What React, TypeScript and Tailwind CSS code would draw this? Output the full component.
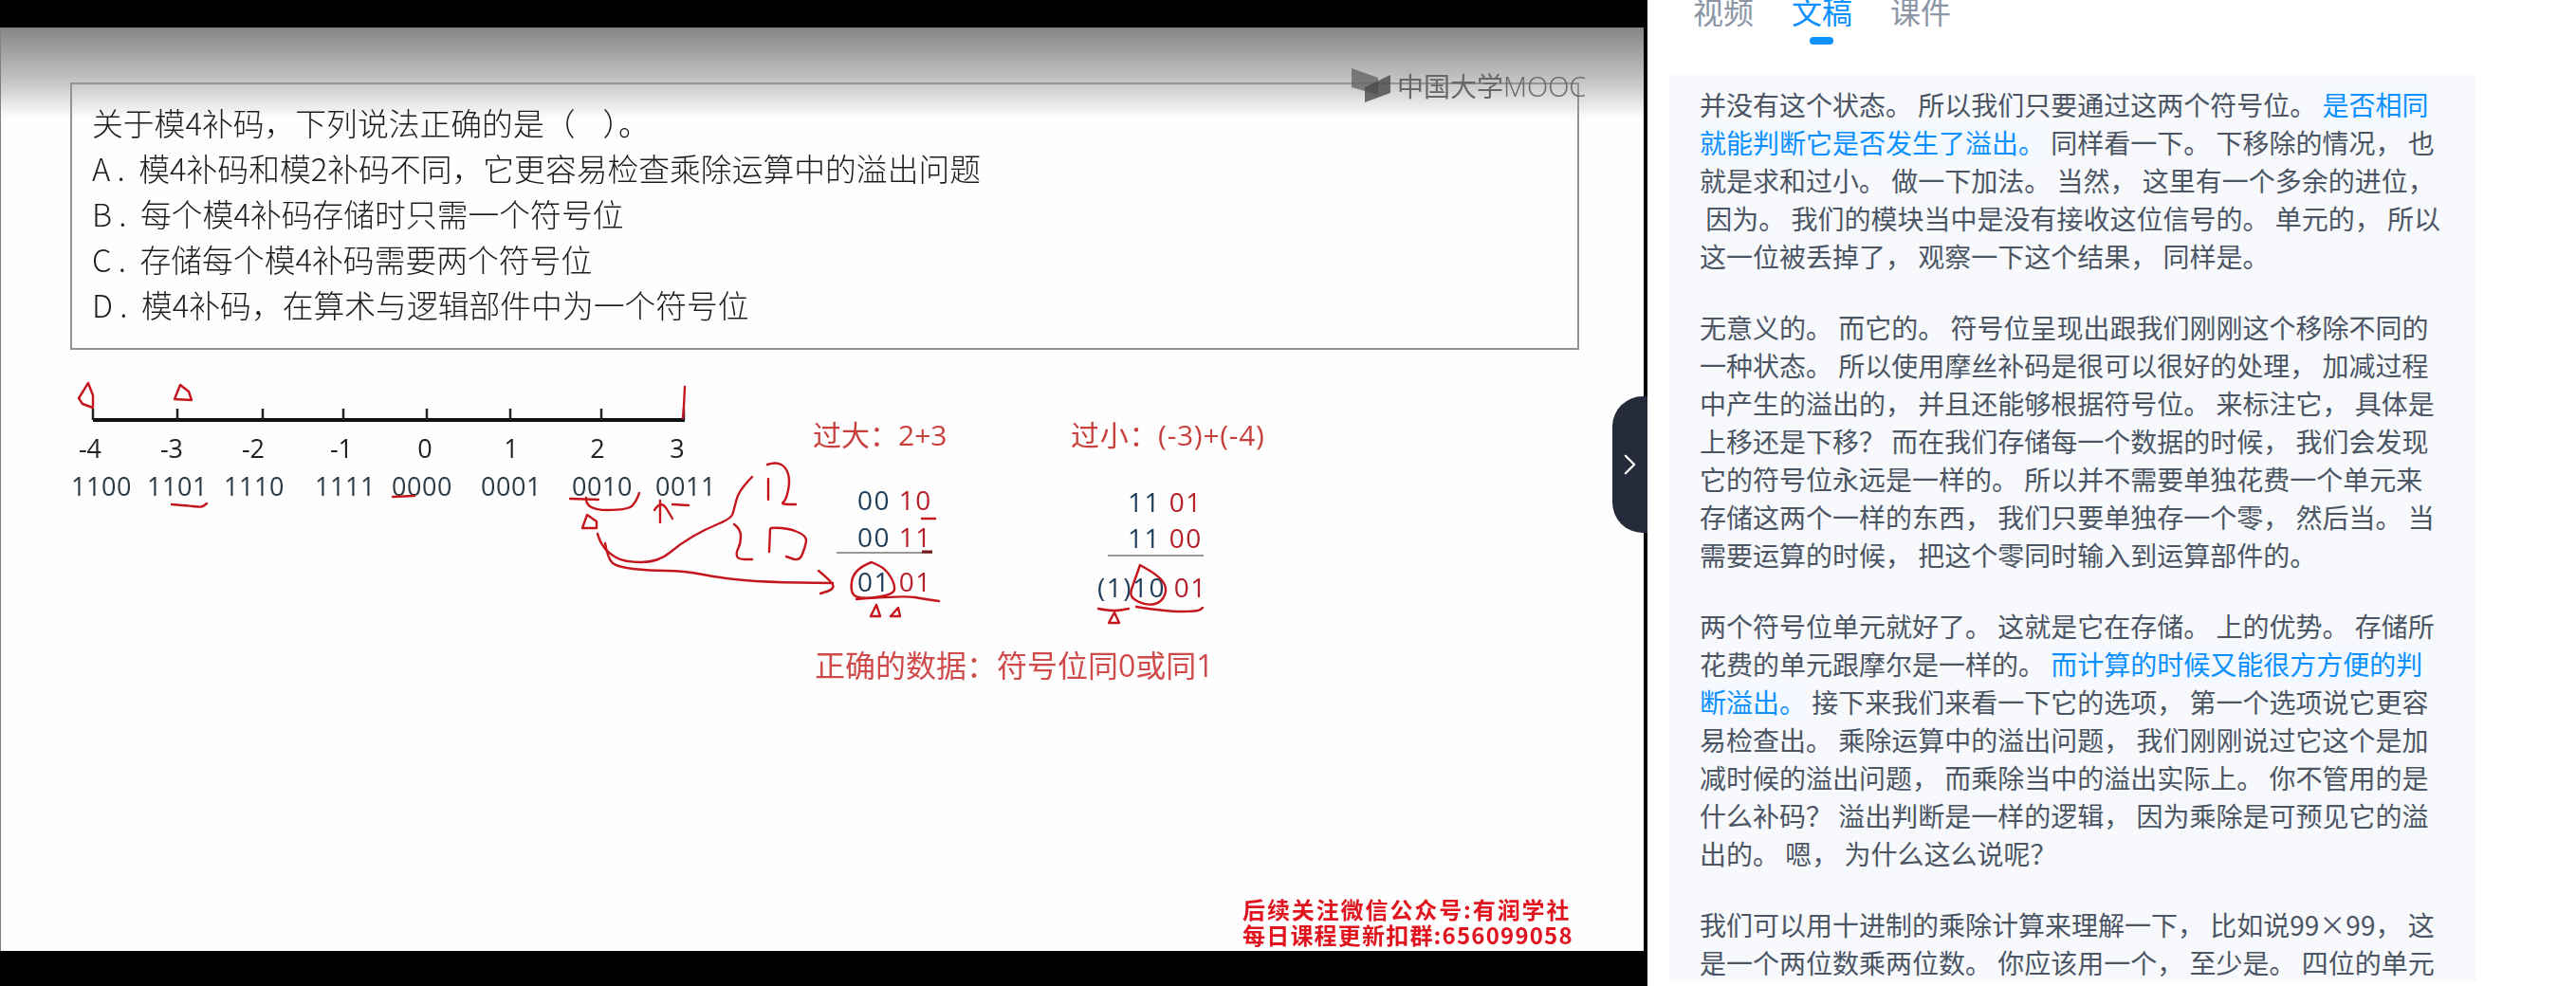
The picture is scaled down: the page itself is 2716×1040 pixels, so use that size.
import { ChevronRight } from "lucide-react"
import type { ReactNode } from "react"

const latin = "font-['Open_Sans','Noto_Sans_CJK_SC',sans-serif]"

// pen strokes drawn over the slide, in page coordinates
const strokes: number[][][] = [
  [[92, 404], [82, 420], [86, 426], [97, 430], [97, 417], [92, 404]],
  [[189, 406], [183, 421], [201, 422], [198, 413], [189, 406]],
  [[721, 408], [720, 430], [719, 441]],
  [[180, 532], [204, 534], [212, 535], [217, 531]],
  [[413, 524], [436, 523]],
  [[600, 526], [630, 527]],
  [[617, 525], [616, 538], [662, 538], [670, 528], [673, 520]],
  [[618, 543], [613, 557], [628, 557], [628, 550], [618, 543]],
  [[695, 551], [695, 528]],
  [[689, 538], [696, 527], [708, 547]],
  [[708, 532], [725, 533]],
  [[792, 503], [778, 517], [773, 537], [770, 547], [743, 558], [717, 573], [693, 593], [657, 593], [640, 583], [632, 572], [629, 563]],
  [[637, 573], [640, 590], [650, 598], [683, 602], [720, 602], [760, 610], [807, 614], [877, 615]],
  [[862, 602], [878, 615], [877, 622], [864, 626]],
  [[809, 505], [809, 527]],
  [[808, 490], [817, 487], [828, 493], [832, 507], [828, 527], [822, 532], [838, 532]],
  [[773, 553], [780, 558], [780, 573], [775, 583], [777, 590], [792, 590]],
  [[811, 558], [810, 582]],
  [[812, 557], [827, 556], [850, 565], [848, 577], [842, 592], [828, 587]],
  [[918, 593], [899, 600], [895, 627], [910, 632], [941, 627], [943, 617], [933, 600], [918, 593]],
  [[902, 632], [952, 628], [975, 632], [989, 634]],
  [[923, 638], [917, 650], [927, 650], [923, 638]],
  [[946, 641], [938, 650], [948, 650], [946, 641]],
  [[971, 547], [985, 547]],
  [[1201, 596], [1195, 613], [1189, 630], [1209, 639], [1224, 635], [1230, 620], [1220, 607], [1201, 596]],
  [[1157, 642], [1172, 645], [1189, 642]],
  [[1174, 646], [1168, 657], [1179, 657], [1174, 646]],
  [[1197, 640], [1228, 645], [1262, 645], [1267, 641]],
]

const ticks = [97, 186, 276, 361, 449, 537, 633, 720]

function strokePath(pts: number[][]) {
  let d = `M${pts[0][0]} ${pts[0][1]}`
  const last = pts[pts.length - 1]
  // the little triangles keep their corners
  if (pts.length <= 6 && pts[0][0] === last[0] && pts[0][1] === last[1]) {
    return d + pts.slice(1).map((p) => ` L${p[0]} ${p[1]}`).join("")
  }
  for (let i = 1; i < pts.length - 1; i++) {
    const mx = (pts[i][0] + pts[i + 1][0]) / 2
    const my = (pts[i][1] + pts[i + 1][1]) / 2
    d += ` Q${pts[i][0]} ${pts[i][1]} ${mx} ${my}`
  }
  return `${d} L${last[0]} ${last[1]}`
}

function Ink() {
  return (
    <svg className="absolute left-0 top-0 h-[974px] w-[1733px]" viewBox="0 29 1733 974" fill="none">
      <path d="M97 443H721" stroke="#111" strokeWidth="4" />
      {ticks.map((x) => (
        <path key={x} d={`M${x} 431V443`} stroke="#222" strokeWidth="2.5" />
      ))}
      <path d="M881 583H982M1167 586H1268" stroke="#777" strokeWidth="1.5" />
      <path d="M971 582H982" stroke="#7a1a1a" strokeWidth="3" />
      {strokes.map((pts, i) => (
        <path key={i} d={strokePath(pts)} stroke="#c4161c" strokeWidth="2.4" strokeLinecap="round" strokeLinejoin="round" />
      ))}
    </svg>
  )
}

function Watermark() {
  return (
    <div className="absolute left-[1424px] top-[43px] flex h-[36px] items-center text-[#666767]">
      <svg width="42" height="36" viewBox="0 0 42 36">
        <path d="M0 0L28 10V28L0 20Z" fill="#6a6a6a" opacity="0.85" />
        <path d="M41 7L14 20V36L41 26Z" fill="#4a4a4a" opacity="0.8" />
      </svg>
      <span className="ml-[6px] text-[28px] leading-none">中国大学</span>
      <span className="text-[29px] font-light leading-none font-['Open_Sans',sans-serif]">MOOC</span>
    </div>
  )
}

function Question() {
  return (
    <div className="ml-[73px] mt-[58px] h-[282px] w-[1591px] border-2 border-[#8f9595] pl-[21px] pt-[16px] text-[32.8px] font-light leading-[48px] text-[#1c1c1c] whitespace-pre">
      <p>关于模4补码，下列说法正确的是（    ）。</p>
      <p>A .  模4补码和模2补码不同，它更容易检查乘除运算中的溢出问题</p>
      <p>B .  每个模4补码存储时只需一个符号位</p>
      <p>C .  存储每个模4补码需要两个符号位</p>
      <p>D .  模4补码，在算术与逻辑部件中为一个符号位</p>
    </div>
  )
}

function NumberLine() {
  return (
    <div className={`w-[856px] pt-[86px] text-center ${latin}`}>
      <div className="flex text-[27px] leading-[36px] text-[#222]">
        <span className="ml-[74px] w-[40px]">-4</span>
        <span className="ml-[46px] w-[40px]">-3</span>
        <span className="ml-[46px] w-[40px]">-2</span>
        <span className="ml-[53px] w-[40px]">-1</span>
        <span className="ml-[48px] w-[40px]">0</span>
        <span className="ml-[51px] w-[40px]">1</span>
        <span className="ml-[51px] w-[40px]">2</span>
        <span className="ml-[44px] w-[40px]">3</span>
      </div>
      <div className="mt-[4px] flex text-[27px] leading-[36px] tracking-[0.5px] text-[#2b3a44]">
        <span className="ml-[74px] w-[64px]">1100</span>
        <span className="ml-[16px] w-[64px]">1101</span>
        <span className="ml-[17px] w-[64px]">1110</span>
        <span className="ml-[32px] w-[64px]">1111</span>
        <span className="ml-[17px] w-[64px]">0000</span>
        <span className="ml-[30px] w-[64px]">0001</span>
        <span className="ml-[32px] w-[64px]">0010</span>
        <span className="ml-[24px] w-[64px]">0011</span>
      </div>
    </div>
  )
}

function SumRow({ sign, low, className }: { sign: string; low: string; className: string }) {
  return (
    <p className={`text-[28px] leading-[36px] tracking-[1.5px] text-[#1e3d59] whitespace-pre ${className}`}>
      {sign} <span className="text-[#b5202a]">{low}</span>
    </p>
  )
}

function Sums() {
  return (
    <div className="pt-[72px]">
      <div className={`flex ${latin}`}>
        <div className="w-[272px]">
          <h3 className="text-[30px] leading-[36px] text-[#c8403c] whitespace-pre">过大：2+3</h3>
          <SumRow sign="00" low="10" className="mt-[32px] pl-[47px]" />
          <SumRow sign="00" low="11" className="mt-[3px] pl-[47px]" />
          <SumRow sign="01" low="01" className="mt-[11px] pl-[47px]" />
        </div>
        <div>
          <h3 className="text-[30px] leading-[36px] tracking-[0.7px] text-[#c8403c] whitespace-pre">过小：(-3)+(-4)</h3>
          <SumRow sign="11" low="01" className="mt-[34px] pl-[60px]" />
          <SumRow sign="11" low="00" className="mt-[2px] pl-[60px]" />
          <SumRow sign="(1)10" low="01" className="mt-[16px] pl-[28px]" />
        </div>
      </div>
      <p className={`ml-[2px] mt-[47px] text-[32px] leading-[36px] text-[#cf4a4a] ${latin}`}>正确的数据：符号位同0或同1</p>
    </div>
  )
}

function Slide() {
  return (
    <div className="relative flex h-[974px] w-[1733px] flex-col border-l border-[#808080] bg-[linear-gradient(180deg,#858585_0px,#c4c4c4_56px,#fefefe_96px)] blur-[0.6px]">
      <Question />
      <div className="flex">
        <NumberLine />
        <Sums />
      </div>
      <div className="mt-auto w-[423px] self-end pb-[4px] text-[24px] font-bold leading-[27px] text-[#e0141f] whitespace-pre">
        <p className="tracking-[1.9px]">后续关注微信公众号:有润学社</p>
        <p className="tracking-[1.2px]">每日课程更新扣群:656099058</p>
      </div>
      <Ink />
      <Watermark />
    </div>
  )
}

function Hl({ children }: { children: ReactNode }) {
  return <span className="bg-[#f3f9ff] text-[#0a90ff]">{children}</span>
}

function Transcript() {
  return (
    <div className="ml-[23px] h-[956px] w-[851px] overflow-hidden bg-[#f7f9fd] pl-[32px] pt-[11px] text-[28px] leading-[40px] text-[#4b5563] whitespace-pre">
      <p className="mb-[35px]">
        并没有这个状态。 所以我们只要通过这两个符号位。 <Hl>是否相同</Hl>
        <br />
        <Hl>就能判断它是否发生了溢出。</Hl> 同样看一下。 下移除的情况， 也
        <br />
        就是求和过小。 做一下加法。 当然， 这里有一个多余的进位，
        <br />
        {" "}因为。 我们的模块当中是没有接收这位信号的。 单元的， 所以
        <br />
        这一位被丢掉了， 观察一下这个结果， 同样是。
      </p>
      <p className="mb-[35px]">
        无意义的。 而它的。 符号位呈现出跟我们刚刚这个移除不同的
        <br />
        一种状态。 所以使用摩丝补码是很可以很好的处理， 加减过程
        <br />
        中产生的溢出的， 并且还能够根据符号位。 来标注它， 具体是
        <br />
        上移还是下移？ 而在我们存储每一个数据的时候， 我们会发现
        <br />
        它的符号位永远是一样的。 所以并不需要单独花费一个单元来
        <br />
        存储这两个一样的东西， 我们只要单独存一个零， 然后当。 当
        <br />
        需要运算的时候， 把这个零同时输入到运算部件的。
      </p>
      <p className="mb-[35px]">
        两个符号位单元就好了。 这就是它在存储。 上的优势。 存储所
        <br />
        花费的单元跟摩尔是一样的。 <Hl>而计算的时候又能很方方便的判</Hl>
        <br />
        <Hl>断溢出。</Hl> 接下来我们来看一下它的选项， 第一个选项说它更容
        <br />
        易检查出。 乘除运算中的溢出问题， 我们刚刚说过它这个是加
        <br />
        减时候的溢出问题， 而乘除当中的溢出实际上。 你不管用的是
        <br />
        什么补码？ 溢出判断是一样的逻辑， 因为乘除是可预见它的溢
        <br />
        出的。 嗯， 为什么这么说呢？
      </p>
      <p>
        我们可以用十进制的乘除计算来理解一下， 比如说99×99， 这
        <br />
        是一个两位数乘两位数。 你应该用一个， 至少是。 四位的单元
      </p>
    </div>
  )
}

export default function App() {
  return (
    <div className="flex h-[1040px] w-[2716px] overflow-hidden bg-white font-['Noto_Sans_CJK_SC','Noto_Sans',sans-serif]">
      <div className="relative h-full w-[1737px] bg-black pt-[29px]">
        <Slide />
        <button className="absolute right-0 top-[418px] flex h-[144px] w-[37px] items-center justify-center rounded-l-[32px] bg-[#252b3a] text-white">
          <ChevronRight size={48} strokeWidth={1.5} />
        </button>
      </div>
      <div className="flex-1">
        <div className="h-[84px]">
          <div className="-mt-[5px] flex gap-10 pl-[48px] text-[32px] leading-[32px] text-[#8b95a5]">
            <span>视频</span>
            <span className="text-[#0a90ff]">文稿</span>
            <span>课件</span>
          </div>
          <div className="ml-[171px] mt-[12px] h-[8px] w-[25px] rounded-full bg-[#0a90ff]" />
        </div>
        <Transcript />
      </div>
    </div>
  )
}
